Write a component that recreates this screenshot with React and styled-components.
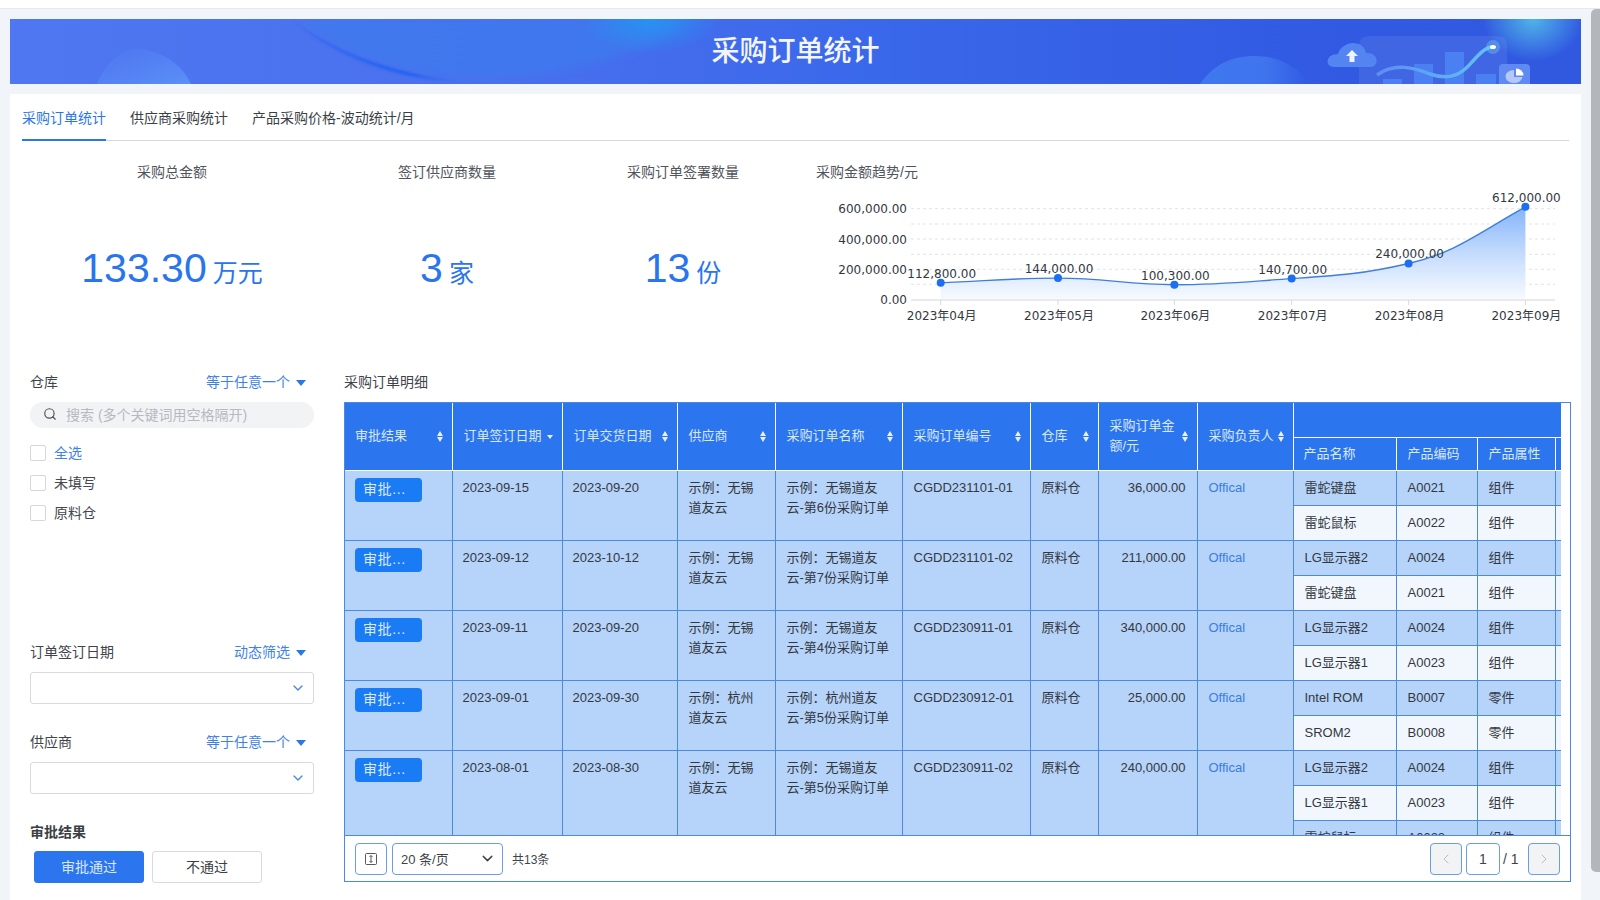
import React from "react";
import styled, { createGlobalStyle } from "styled-components";
import { ChevronDown, ChevronLeft, ChevronRight, Search } from "lucide-react";

const FONT = `"Liberation Sans", "Noto Sans CJK SC", sans-serif`;
const BLUE = "#2b76ee";

const GlobalStyle = createGlobalStyle`
  html, body {
    margin: 0;
    height: 900px;
    overflow: hidden;
    background: #f1f4f9;
    font-family: ${FONT};
    color: #33383f;
  }
  * { box-sizing: border-box; }
`;

const Page = styled.div`
  position: relative;
  width: 1600px;
  height: 900px;
  overflow: hidden;
`;
const TopRule = styled.div`
  height: 9px;
  background: #fff;
  border-bottom: 1px solid #e6e8eb;
`;
const Main = styled.div`
  padding: 10px 19px 0 10px;
`;
const Banner = styled.header`
  position: relative;
  height: 65px;
  display: flex;
  align-items: center;
  justify-content: center;
  overflow: hidden;
  background: linear-gradient(90deg, #4f77f1 0%, #4a70ee 30%, #3a68ea 55%, #3159e2 85%, #3059e0 100%);
`;
const BannerArt = styled.svg`
  position: absolute;
  inset: 0;
  width: 100%;
  height: 100%;
`;
const BannerTitle = styled.h1`
  position: relative;
  margin: 0;
  font-size: 28px;
  font-weight: 500;
  line-height: 65px;
  color: #f3f6ff;
`;
const Panel = styled.section`
  margin-top: 10px;
  height: 806px;
  padding: 0 12px;
  background: #fff;
`;
const Tabs = styled.nav`
  display: flex;
  gap: 24px;
  height: 47px;
  border-bottom: 1px solid #d5d7da;
`;
const Tab = styled.div`
  height: 47px;
  line-height: 48px;
  font-size: 14px;
  color: ${(p) => (p.$active ? "#2b77e6" : "#3a3f46")};
  border-bottom: 2px solid ${(p) => (p.$active ? "#2b77e6" : "transparent")};
`;
const Stats = styled.div`
  display: grid;
  grid-template-columns: 300px 250px 222px 775px;
  height: 231px;
  padding-top: 21px;
`;
const Stat = styled.div`
  text-align: center;
`;
const StatTitle = styled.div`
  font-size: 14px;
  line-height: 20px;
  color: #50555c;
`;
const StatValue = styled.div`
  margin-top: 61px;
  line-height: 50px;
  font-size: 41px;
  color: #2a75ed;
`;
const StatUnit = styled.span`
  margin-left: 6px;
  font-size: 25px;
`;
const ChartTitle = styled(StatTitle)`
  padding-left: 22px;
`;
const ChartSvg = styled.svg`
  display: block;
  margin-top: 1px;
  font-family: "DejaVu Sans", "Noto Sans CJK SC", sans-serif;
  font-size: 12px;
`;
const Lower = styled.div`
  display: flex;
  gap: 30px;
`;
const Sidebar = styled.aside`
  flex: none;
  width: 292px;
  padding-left: 8px;
`;
const FilterHead = styled.div`
  display: flex;
  align-items: center;
  justify-content: space-between;
  height: 20px;
  margin-top: ${(p) => p.$top || 0}px;
  padding: 0 8px 2px 0;
  font-size: 14px;
  color: #3f444b;
`;
const FilterMode = styled.span`
  display: flex;
  align-items: center;
  gap: 6px;
  color: #3f82e4;
`;
const Caret = styled.i`
  width: 0;
  height: 0;
  margin-top: 3px;
  border-left: 5px solid transparent;
  border-right: 5px solid transparent;
  border-top: 6px solid #2b77e6;
`;
const SearchBox = styled.div`
  display: flex;
  align-items: center;
  gap: 9px;
  height: 26px;
  margin-top: 10px;
  padding: 0 0 2px 13px;
  border-radius: 13px;
  background: #f2f3f5;
  font-size: 14px;
  color: #b6b9be;
`;
const CheckList = styled.div`
  margin-top: 10px;
`;
const CheckRow = styled.label`
  display: flex;
  align-items: center;
  gap: 8px;
  height: 30px;
  padding-bottom: 2px;
  font-size: 14px;
  color: ${(p) => (p.$accent ? "#3f82e4" : "#43484f")};
`;
const CheckBox = styled.i`
  width: 16px;
  height: 16px;
  margin-top: 2px;
  border: 1px solid #d5d7da;
  border-radius: 2px;
  background: #fff;
`;
const SelectBox = styled.div`
  display: flex;
  align-items: center;
  justify-content: flex-end;
  height: 32px;
  margin-top: 10px;
  padding-right: 7px;
  border: 1px solid #d8dadd;
  border-radius: 3px;
  color: #4a86dc;
`;
const GroupTitle = styled.div`
  margin-top: 28px;
  font-size: 14px;
  font-weight: 700;
  line-height: 20px;
  color: #3a3f46;
`;
const ChoiceRow = styled.div`
  display: flex;
  gap: 8px;
  margin-top: 9px;
  padding-left: 4px;
`;
const Choice = styled.button`
  width: 110px;
  height: 32px;
  padding: 0 0 2px;
  border: 1px solid ${(p) => (p.$on ? BLUE : "#d8dadd")};
  border-radius: 3px;
  background: ${(p) => (p.$on ? BLUE : "#fff")};
  color: ${(p) => (p.$on ? "#d9e7fd" : "#3a3f46")};
  font: 14px ${FONT};
`;
const TableArea = styled.div`
  flex: none;
  width: 1227px;
`;
const TableTitle = styled.div`
  font-size: 14px;
  line-height: 20px;
  color: #3f444b;
`;
const Frame = styled.div`
  margin-top: 10px;
  border: 1px solid #4a8ae0;
  background: #fff;
`;
const TableClip = styled.div`
  width: 1216px;
  height: 432px;
  overflow: hidden;
`;
const Table = styled.table`
  width: 1310px;
  table-layout: fixed;
  border-collapse: collapse;
  font-size: 13px;
  line-height: 20px;
`;
const Th = styled.th`
  height: ${(p) => p.$h || 67}px;
  padding: 0 9px 0 11px;
  border: 1px solid #fff;
  border-top: 0;
  background: ${BLUE};
  color: #dbe7fb;
  font-weight: 400;
  text-align: left;
  &:first-child { border-left: 0; padding-left: 10px; }
`;
const ThInner = styled.div`
  display: flex;
  align-items: center;
  justify-content: space-between;
`;
const Td = styled.td`
  height: 35px;
  padding: ${(p) => (p.$top ? `7px 11px 7px ${p.$tight ? 10 : 11}px` : "0 11px")};
  border: 1px solid #4a8ae0;
  vertical-align: ${(p) => (p.$top ? "top" : "middle")};
  background: ${(p) => (p.$light ? "#f2f7fe" : "#b6d3fa")};
  color: ${(p) => (p.$link ? "#3a7de0" : "#33383f")};
  text-align: ${(p) => (p.$right ? "right" : "left")};
  white-space: nowrap;
  &:first-child { border-left: 0; }
`;
const Badge = styled.span`
  display: block;
  width: 67px;
  height: 24px;
  padding-left: 8px;
  border-radius: 4px;
  background: #1a7cf5;
  color: #dbe9ff;
  font-size: 14px;
  line-height: 23px;
  letter-spacing: 0.6px;
`;
const Footer = styled.div`
  display: flex;
  align-items: center;
  height: 46px;
  padding: 0 10px;
  border-top: 1px solid #4a8ae0;
  font-size: 12px;
  color: #3f444b;
`;
const PageBtn = styled.div`
  display: flex;
  align-items: center;
  justify-content: center;
  width: ${(p) => p.$w || 32}px;
  margin-left: ${(p) => p.$gap || 0}px;
  height: 32px;
  border: 1px solid #6a9de2;
  border-radius: 4px;
  background: ${(p) => (p.$off ? "#f2f3f5" : "#fff")};
  color: ${(p) => (p.$off ? "#b4b8bd" : "#3f444b")};
  font-size: 14px;
`;
const SizeSelect = styled(PageBtn)`
  justify-content: space-between;
  margin: 0 9px 0 5px;
  padding: 0 6px 0 8px;
  font-size: 13px;
`;
const Pager = styled.div`
  display: flex;
  align-items: center;
  margin-left: auto;
`;
const PagerTotal = styled.span`
  width: 28px;
  padding-left: 3px;
  font-size: 14px;
`;
const Scrollbar = styled.div`
  position: absolute;
  top: 9px;
  right: 0;
  width: 9px;
  height: 863px;
  border-radius: 5px 0 0 5px;
  background: #b3b6bb;
`;

const points = [
  ["2023年04月", "112,800.00", 112800, 940.7],
  ["2023年05月", "144,000.00", 144000, 1058],
  ["2023年06月", "100,300.00", 100300, 1174.4],
  ["2023年07月", "140,700.00", 140700, 1291.7],
  ["2023年08月", "240,000.00", 240000, 1408.6],
  ["2023年09月", "612,000.00", 612000, 1525.4],
];
const yOf = (v) => 301 - (v / 600000) * 91.3;
const coords = points.map((p) => [p[3], yOf(p[2])]);

// smooth line through the points, flat tangents at local extremes
function smoothPath(pts) {
  const last = pts.length - 1;
  const slopes = pts.map((p, i) => {
    if (i === 0) return (pts[1][1] - p[1]) / (pts[1][0] - p[0]);
    if (i === last) return ((p[1] - pts[i - 1][1]) / (p[0] - pts[i - 1][0])) * 1.15;
    const a = pts[i - 1];
    const b = pts[i + 1];
    if ((p[1] - a[1]) * (b[1] - p[1]) <= 0) return 0;
    return ((b[1] - a[1]) / (b[0] - a[0])) * 0.75;
  });
  let d = `M${pts[0][0]} ${pts[0][1]}`;
  for (let i = 1; i < pts.length; i++) {
    const [x0, y0] = pts[i - 1];
    const [x1, y1] = pts[i];
    const dx = (x1 - x0) * 0.4;
    d += ` C${x0 + dx} ${y0 + slopes[i - 1] * dx} ${x1 - dx} ${y1 - slopes[i] * dx} ${x1} ${y1}`;
  }
  return d;
}
const linePath = smoothPath(coords);

const TrendChart = () => (
  <ChartSvg width="775" height="150" viewBox="794 184 775 150">
    <defs>
      <linearGradient id="areaFill" x1="0" y1="0" x2="0" y2="1">
        <stop offset="0" stopColor="#84b4fa" />
        <stop offset="0.5" stopColor="#c4dbfd" />
        <stop offset="1" stopColor="#f8fbff" />
      </linearGradient>
    </defs>
    {[209.7, 225, 240, 255.3, 270.3, 285.3].map((y) => (
      <line key={y} x1="911" x2="1555" y1={y} y2={y} stroke="#e2e3e6" strokeDasharray="3 3" />
    ))}
    <path d={`${linePath} L1525.4 301 L940.7 301 Z`} fill="url(#areaFill)" />
    <line x1="911" x2="1555" y1="301" y2="301" stroke="#e0e3e8" strokeWidth="1.5" />
    <path d={linePath} fill="none" stroke="#3f7fdc" strokeWidth="1.4" />
    {["600,000.00", "400,000.00", "200,000.00", "0.00"].map((t, i) => (
      <text key={t} x="907" y={[213.5, 244.5, 274.5, 305][i]} textAnchor="end" fill="#33383f">
        {t}
      </text>
    ))}
    {points.map((p, i) => (
      <g key={p[0]}>
        <line x1={p[3]} x2={p[3]} y1="301" y2="306" stroke="#d8dbe0" />
        <circle cx={coords[i][0]} cy={coords[i][1]} r="4" fill="#1c6ff0" />
        <text x={p[3] + 1} y={coords[i][1] - 5} textAnchor="middle" fill="#33383f">
          {p[1]}
        </text>
        <text x={p[3] + 1} y="321" textAnchor="middle" fill="#33383f">
          {p[0]}
        </text>
      </g>
    ))}
  </ChartSvg>
);

const BannerDecor = () => (
  <BannerArt viewBox="0 0 1571 65" preserveAspectRatio="none">
    <defs>
      <filter id="soft" x="-10%" y="-30%" width="120%" height="160%">
        <feGaussianBlur stdDeviation="4" />
      </filter>
      <filter id="softEdge" x="-10%" y="-30%" width="120%" height="160%">
        <feGaussianBlur stdDeviation="1" />
      </filter>
      <radialGradient id="glowTop" cx="0.5" cy="0.5" r="0.5">
        <stop offset="0" stopColor="#50b4e8" />
        <stop offset="1" stopColor="#50b4e8" stopOpacity="0" />
      </radialGradient>
      <radialGradient id="glowMid" cx="0.5" cy="0.5" r="0.5">
        <stop offset="0" stopColor="#2792f2" />
        <stop offset="1" stopColor="#2792f2" stopOpacity="0" />
      </radialGradient>
      <linearGradient id="arcEdge" x1="0" y1="0" x2="1" y2="0">
        <stop offset="0" stopColor="#3a6cf0" />
        <stop offset="0.6" stopColor="#2262f0" />
        <stop offset="1" stopColor="#4a70ee" stopOpacity="0" />
      </linearGradient>
      <linearGradient id="bump" x1="0" y1="0" x2="1" y2="1">
        <stop offset="0" stopColor="#5a8cf5" stopOpacity="0" />
        <stop offset="1" stopColor="#5a90f8" />
      </linearGradient>
      <linearGradient id="bumpRight" x1="0" y1="0" x2="1" y2="0">
        <stop offset="0" stopColor="#3f78ee" />
        <stop offset="0.6" stopColor="#3f74ee" />
        <stop offset="1" stopColor="#3f74ee" stopOpacity="0" />
      </linearGradient>
      <linearGradient id="curve" x1="0" y1="0" x2="1" y2="0">
        <stop offset="0" stopColor="#5d8df0" />
        <stop offset="1" stopColor="#62c4f6" />
      </linearGradient>
    </defs>
    <g transform="translate(-10 -19)">
      <path d="M97 84 C105 62 125 47 140 49 C165 52 183 66 191 84 Z" fill="url(#bump)" />
      <path d="M300 19 C345 58 415 78 490 78 C590 74 660 48 685 19 Z" fill="#3f7aee" fillOpacity="0.75" filter="url(#soft)" />
      <ellipse cx="650" cy="19" rx="70" ry="34" fill="url(#glowMid)" />
      <path d="M291 19 C340 62 410 84 490 84 C420 80 345 60 291 19 Z" fill="url(#arcEdge)" filter="url(#softEdge)" />
      <path d="M1200 84 C1215 62 1235 56 1255 56 C1280 56 1300 68 1308 84 Z" fill="url(#bumpRight)" />
      <ellipse cx="1533" cy="19" rx="50" ry="42" fill="url(#glowTop)" />
      <path d="M1359 84 V46 Q1359 36 1369 36 H1497 Q1507 36 1507 46 V84 Z" fill="#fff" fillOpacity="0.08" />
      <path d="M1383 84 V79 H1402 V84 Z" fill="#4a80f2" />
      <path d="M1414 84 V64 H1433 V84 Z" fill="#4a80f2" />
      <path d="M1445 84 V52 H1464 V84 Z" fill="#4a80f2" />
      <path d="M1476 84 V74 H1496 V84 Z" fill="#4a80f2" />
      <path d="M1377 75 C1395 62 1415 68 1430 74 C1450 81 1462 74 1472 62 C1480 53 1486 47 1493 47" fill="none" stroke="url(#curve)" strokeWidth="3.5" />
      <circle cx="1493" cy="47" r="7" fill="#6fc6f8" fillOpacity="0.4" />
      <ellipse cx="1493" cy="47" rx="3" ry="2" fill="#fff" />
      <path d="M1334 67 C1325 67 1325 54 1338 54 C1340 47 1347 43 1353 43 C1360 43 1365 47 1366 53 C1379 52 1380 67 1370 67 Z" fill="#5484f0" />
      <path d="M1352 50 L1358 56 H1354.5 V62 H1349.5 V56 H1346 Z" fill="#eef3ff" />
      <path d="M1499 84 V68 Q1499 64 1503 64 H1526 Q1530 64 1530 68 V84 Z" fill="#5f8af2" />
      <path d="M1514 70 A8.5 6.5 0 1 0 1522.5 77 H1514 Z" fill="#b6c8fa" />
      <path d="M1516 68.5 A7.5 7 0 0 1 1523.5 75.5 H1516 Z" fill="#fff" />
    </g>
  </BannerArt>
);

const SortIcon = ({ down }) => (
  <svg width="6" height="11" viewBox="0 0 6 11" style={{ flex: "none" }}>
    {!down && <path d="M3 0 L6 5 H0 Z" fill="#e8f0ff" />}
    <path d={down ? "M0 4 H6 L3 8 Z" : "M0 6 H6 L3 11 Z"} fill="#e8f0ff" />
  </svg>
);

const orders = [
  {
    signed: "2023-09-15", due: "2023-09-20", supplier: ["示例：无锡", "道友云"], name: ["示例：无锡道友", "云-第6份采购订单"],
    code: "CGDD231101-01", amount: "36,000.00",
    items: [["雷蛇键盘", "A0021", "组件"], ["雷蛇鼠标", "A0022", "组件"]],
  },
  {
    signed: "2023-09-12", due: "2023-10-12", supplier: ["示例：无锡", "道友云"], name: ["示例：无锡道友", "云-第7份采购订单"],
    code: "CGDD231101-02", amount: "211,000.00",
    items: [["LG显示器2", "A0024", "组件"], ["雷蛇键盘", "A0021", "组件"]],
  },
  {
    signed: "2023-09-11", due: "2023-09-20", supplier: ["示例：无锡", "道友云"], name: ["示例：无锡道友", "云-第4份采购订单"],
    code: "CGDD230911-01", amount: "340,000.00",
    items: [["LG显示器2", "A0024", "组件"], ["LG显示器1", "A0023", "组件"]],
  },
  {
    signed: "2023-09-01", due: "2023-09-30", supplier: ["示例：杭州", "道友云"], name: ["示例：杭州道友", "云-第5份采购订单"],
    code: "CGDD230912-01", amount: "25,000.00",
    items: [["Intel ROM", "B0007", "零件"], ["SROM2", "B0008", "零件"]],
  },
  {
    signed: "2023-08-01", due: "2023-08-30", supplier: ["示例：无锡", "道友云"], name: ["示例：无锡道友", "云-第5份采购订单"],
    code: "CGDD230911-02", amount: "240,000.00",
    items: [["LG显示器2", "A0024", "组件"], ["LG显示器1", "A0023", "组件"], ["雷蛇鼠标", "A0022", "组件"]],
  },
];

const colWidths = [107, 110, 115, 98, 127, 128, 68, 99, 96, 103, 81, 78, 100];
const headers = [
  ["审批结果"], ["订单签订日期", true], ["订单交货日期"], ["供应商"], ["采购订单名称"],
  ["采购订单编号"], ["仓库"], ["采购订单金\n额/元"], ["采购负责人"],
];

const OrderTable = () => (
  <Table>
    <colgroup>
      {colWidths.map((w, i) => (
        <col key={i} width={w} />
      ))}
    </colgroup>
    <thead>
      <tr>
        {headers.map(([label, down]) => (
          <Th key={label} rowSpan={2}>
            <ThInner>
              <span style={{ whiteSpace: "pre" }}>{label}</span>
              <SortIcon down={down} />
            </ThInner>
          </Th>
        ))}
        <Th colSpan={4} $h={34} />
      </tr>
      <tr>
        <Th $h={33}>产品名称</Th>
        <Th $h={33}>产品编码</Th>
        <Th $h={33}>产品属性</Th>
        <Th $h={33} />
      </tr>
    </thead>
    <tbody>
      {orders.map((o) =>
        o.items.map((item, i) => (
          <tr key={o.code + i}>
            {i === 0 && (
              <>
                <Td $top $tight rowSpan={o.items.length}><Badge>审批...</Badge></Td>
                <Td $top $tight rowSpan={o.items.length}>{o.signed}</Td>
                <Td $top $tight rowSpan={o.items.length}>{o.due}</Td>
                <Td $top rowSpan={o.items.length}>{o.supplier[0]}<br />{o.supplier[1]}</Td>
                <Td $top rowSpan={o.items.length}>{o.name[0]}<br />{o.name[1]}</Td>
                <Td $top rowSpan={o.items.length}>{o.code}</Td>
                <Td $top rowSpan={o.items.length}>原料仓</Td>
                <Td $top $right rowSpan={o.items.length}>{o.amount}</Td>
                <Td $top $link rowSpan={o.items.length}>Offical</Td>
              </>
            )}
            {item.map((text) => (
              <Td key={text} $light={i % 2 === 1}>{text}</Td>
            ))}
            <Td $light={i % 2 === 1} />
          </tr>
        ))
      )}
    </tbody>
  </Table>
);

const FilterTitle = ({ label, mode, top }) => (
  <FilterHead $top={top}>
    <span>{label}</span>
    <FilterMode>
      {mode}
      <Caret />
    </FilterMode>
  </FilterHead>
);

export default function App() {
  return (
    <Page>
      <GlobalStyle />
      <TopRule />
      <Main>
        <Banner>
          <BannerDecor />
          <BannerTitle>采购订单统计</BannerTitle>
        </Banner>
        <Panel>
          <Tabs>
            <Tab $active>采购订单统计</Tab>
            <Tab>供应商采购统计</Tab>
            <Tab>产品采购价格-波动统计/月</Tab>
          </Tabs>
          <Stats>
            <Stat>
              <StatTitle>采购总金额</StatTitle>
              <StatValue>133.30<StatUnit>万元</StatUnit></StatValue>
            </Stat>
            <Stat>
              <StatTitle>签订供应商数量</StatTitle>
              <StatValue>3<StatUnit>家</StatUnit></StatValue>
            </Stat>
            <Stat>
              <StatTitle>采购订单签署数量</StatTitle>
              <StatValue>13<StatUnit>份</StatUnit></StatValue>
            </Stat>
            <div>
              <ChartTitle>采购金额趋势/元</ChartTitle>
              <TrendChart />
            </div>
          </Stats>
          <Lower>
            <Sidebar>
              <FilterTitle label="仓库" mode="等于任意一个" />
              <SearchBox>
                <Search size={14} color="#4d5258" />
                搜索 (多个关键词用空格隔开)
              </SearchBox>
              <CheckList>
                <CheckRow $accent><CheckBox />全选</CheckRow>
                <CheckRow><CheckBox />未填写</CheckRow>
                <CheckRow><CheckBox />原料仓</CheckRow>
              </CheckList>
              <FilterTitle label="订单签订日期" mode="动态筛选" top={114} />
              <SelectBox><ChevronDown size={16} /></SelectBox>
              <FilterTitle label="供应商" mode="等于任意一个" top={28} />
              <SelectBox><ChevronDown size={16} /></SelectBox>
              <GroupTitle>审批结果</GroupTitle>
              <ChoiceRow>
                <Choice $on>审批通过</Choice>
                <Choice>不通过</Choice>
              </ChoiceRow>
            </Sidebar>
            <TableArea>
              <TableTitle>采购订单明细</TableTitle>
              <Frame>
                <TableClip>
                  <OrderTable />
                </TableClip>
                <Footer>
                  <PageBtn>
                    <svg width="14" height="14" viewBox="0 0 14 14" fill="none" stroke="#555a60">
                      <rect x="1.5" y="1.5" width="11" height="11" rx="1" />
                      <path d="M7 3.5 V10.5 M5.5 5 L7 3.5 L8.5 5 M5.5 9 L7 10.5 L8.5 9" />
                    </svg>
                  </PageBtn>
                  <SizeSelect $w={111}>
                    20 条/页
                    <ChevronDown size={17} />
                  </SizeSelect>
                  共13条
                  <Pager>
                    <PageBtn $off><ChevronLeft size={16} strokeWidth={1.4} /></PageBtn>
                    <PageBtn $w={34} $gap={4}>1</PageBtn>
                    <PagerTotal>/ 1</PagerTotal>
                    <PageBtn $off><ChevronRight size={16} strokeWidth={1.4} /></PageBtn>
                  </Pager>
                </Footer>
              </Frame>
            </TableArea>
          </Lower>
        </Panel>
      </Main>
      <Scrollbar />
    </Page>
  );
}
